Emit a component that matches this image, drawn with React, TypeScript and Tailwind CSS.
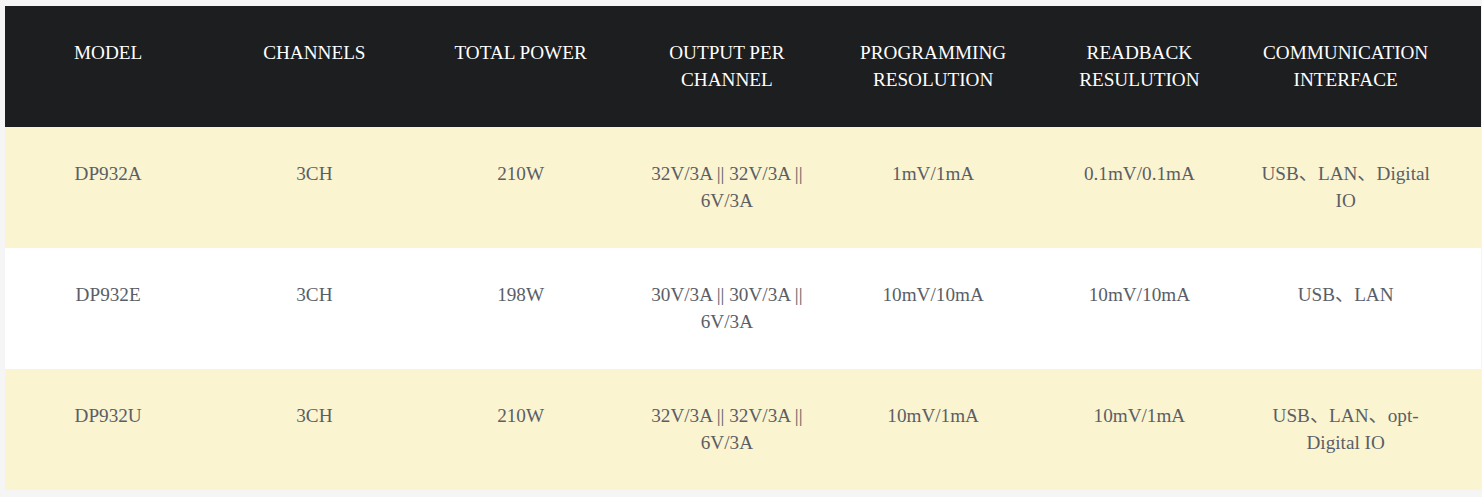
import React from 'react';

const headers: string[][] = [
  ['MODEL'],
  ['CHANNELS'],
  ['TOTAL POWER'],
  ['OUTPUT PER', 'CHANNEL'],
  ['PROGRAMMING', 'RESOLUTION'],
  ['READBACK', 'RESULUTION'],
  ['COMMUNICATION', 'INTERFACE'],
];

const rows: string[][] = [
  ['DP932A', '3CH', '210W', '32V/3A || 32V/3A || 6V/3A', '1mV/1mA', '0.1mV/0.1mA', 'USB、LAN、Digital IO'],
  ['DP932E', '3CH', '198W', '30V/3A || 30V/3A || 6V/3A', '10mV/10mA', '10mV/10mA', 'USB、LAN'],
  ['DP932U', '3CH', '210W', '32V/3A || 32V/3A || 6V/3A', '10mV/1mA', '10mV/1mA', 'USB、LAN、opt-Digital IO'],
];

export default function App() {
  return (
    <div className="min-h-[497px] bg-[#f5f5f5] pt-[6px] pl-[5px] pr-px font-['Liberation_Serif','Noto_Sans_CJK_SC',serif] text-[19.2px] leading-[27px]">
      <div className="grid grid-cols-[repeat(7,206.25px)_1fr] h-[121px] bg-[#1d1e20] text-white">
        {headers.map((h, i) => (
          <div key={i} className="px-[10px] pt-[33px] text-center">
            {h.map((line) => (
              <div key={line}>{line}</div>
            ))}
          </div>
        ))}
        <div />
      </div>
      {rows.map((r, ri) => (
        <div
          key={r[0]}
          className={`grid grid-cols-[repeat(7,206.25px)_1fr] h-[121px] text-[#5a5e66] ${ri % 2 === 0 ? 'bg-[#fbf4d1]' : 'bg-white'}`}
        >
          {r.map((c, ci) => (
            <div key={ci} className="px-[10px] pt-[33px] text-center">
              {c}
            </div>
          ))}
          <div />
        </div>
      ))}
    </div>
  );
}
